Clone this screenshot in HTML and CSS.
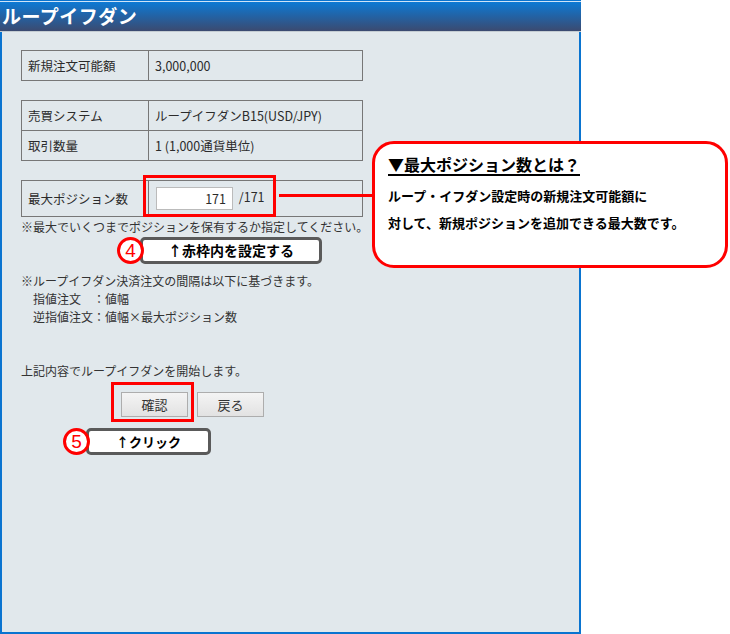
FILE: index.html
```html
<!DOCTYPE html>
<html lang="ja">

<head>
    <meta charset="UTF-8">
    <title>ループイフダン</title>
    <link rel="stylesheet" href="styles.css">
</head>

<body>

    <div class="panel">
        <div class="panel-header">
            <h1>ループイフダン</h1>
        </div>

        <div class="panel-body">
            <table class="info">
                <tr>
                    <th>新規注文可能額</th>
                    <td>3,000,000</td>
                </tr>
            </table>

            <table class="info">
                <tr>
                    <th>売買システム</th>
                    <td>ループイフダンB15(USD/JPY)</td>
                </tr>
                <tr>
                    <th>取引数量</th>
                    <td>1 (1,000通貨単位)</td>
                </tr>
            </table>

            <table class="info max-pos">
                <tr>
                    <th>最大ポジション数</th>
                    <td>
                        <span class="marked marked-input">
                            <input type="text" class="pos-input" value="171"> /171
                        </span>
                    </td>
                </tr>
            </table>
            <p class="hint">※最大でいくつまでポジションを保有するか指定してください。</p>

            <!-- step 4 annotation -->
            <div class="step step-4">
                <span class="step-no">4</span>
                <span class="step-label">↑赤枠内を設定する</span>
            </div>

            <div class="rules">
                <p>※ループイフダン決済注文の間隔は以下に基づきます。</p>
                <div class="rule-grid">
                    <span>指値注文</span><span>：値幅</span>
                    <span>逆指値注文</span><span>：値幅×最大ポジション数</span>
                </div>
            </div>

            <p class="start">上記内容でループイフダンを開始します。</p>

            <div class="buttons">
                <span class="marked marked-button"><button class="btn">確認</button></span>
                <button class="btn">戻る</button>
            </div>

            <!-- step 5 annotation -->
            <div class="step step-5">
                <span class="step-no">5</span>
                <span class="step-label">↑クリック</span>
            </div>
        </div>
    </div>

    <div class="callout">
        <h2 class="callout-title">▼最大ポジション数とは？</h2>
        <p>ループ・イフダン設定時の新規注文可能額に</p>
        <p>対して、新規ポジションを追加できる最大数です。</p>
    </div>

</body>

</html>
```

FILE: styles.css
```css
* {
    box-sizing: border-box;
    margin: 0;
    padding: 0;
    font-family: "Noto Sans CJK JP", "Noto Sans", sans-serif;
}

body {
    width: 730px;
    height: 634px;
    background-color: #fff;
    color: #333;
    font-size: 12px;
    position: relative;
}

.panel {
    width: 581px;
    height: 634px;
    background-color: #e1e8ec;
    border: 2px solid #0a74d0;
    border-top: none;
}

.panel-header {
    height: 32px;
    background: linear-gradient(#0b7bd8, #3b4a70);
    border-top: 1px solid #0a74d0;
    border-bottom: 1px solid #c4ccd2;
    box-shadow: inset 0 1px 0 #cfe4f7;
    margin: 0 -2px 0 -2px;
}

.panel-header h1 {
    color: white;
    font-size: 19px;
    font-weight: bold;
    line-height: 30px;
    padding-left: 2px;
    letter-spacing: 0.5px;
}

.panel-body {
    padding: 18px 0 0 19px;
}

/* info tables */
.info {
    width: 342px;
    border-collapse: collapse;
    border: 1px solid #444;
    margin-bottom: 19px;
}

.info th,
.info td {
    border: 1px solid #777;
    text-align: left;
    font-weight: normal;
    font-size: 12.5px;
    line-height: 19px;
    padding: 5px 6px;
    color: #2b2b2b;
    white-space: nowrap;
}

.info th {
    width: 127px;
}

.max-pos {
    margin-bottom: 0;
    margin-top: 1px;
}

.max-pos td {
    padding: 6px 6px 6px 7px;
}

.pos-input {
    width: 77px;
    height: 23px;
    border: 1px solid #bbb;
    background: white;
    text-align: right;
    font-size: 12.5px;
    padding: 0 6px;
    color: #2b2b2b;
    vertical-align: middle;
    margin-right: 3px;
}

/* red highlight frames */
.marked {
    position: relative;
    display: inline-block;
}

.marked::after {
    content: "";
    position: absolute;
    border: 3px solid #f00;
}

.marked-input::after {
    left: -13px;
    top: -12px;
    right: -11px;
    bottom: -7px;
}

.marked-button::after {
    left: -10px;
    top: -10px;
    right: -6px;
    bottom: -5px;
}

.hint {
    line-height: 16px;
    margin-top: 2px;
    white-space: nowrap;
}

/* step annotations */
.step {
    display: flex;
    align-items: center;
    height: 28px;
}

.step-4 {
    margin: 1px 0 0 96px;
}

.step-5 {
    margin: 10px 0 0 42px;
}

.step-no {
    position: relative;
    z-index: 1;
    width: 27px;
    height: 27px;
    border-radius: 50%;
    border: 3px solid #f00;
    background: white;
    color: #f00;
    font-family: "Liberation Sans", sans-serif;
    font-size: 19px;
    line-height: 21px;
    text-align: center;
}

.step-label {
    height: 27px;
    margin-left: -4px;
    border: 3px solid #5a5a5a;
    border-radius: 5px;
    background: white;
    color: #000;
    font-weight: bold;
    text-align: center;
    line-height: 21px;
}

.step-4 .step-label {
    width: 182px;
    font-size: 14px;
}

.step-5 .step-label {
    width: 125px;
    font-size: 13px;
}

.rules {
    margin-top: 8px;
    line-height: 18px;
}

.rule-grid {
    display: grid;
    grid-template-columns: 60px auto;
    justify-content: start;
    padding-left: 12px;
}

.start {
    margin-top: 36px;
    line-height: 18px;
}

.buttons {
    display: flex;
    gap: 9px;
    margin: 12px 0 0 100px;
}

.btn {
    width: 67px;
    height: 25px;
    border: 1px solid #adadad;
    background: linear-gradient(#f4f4f4, #e2e2e2);
    color: #333;
    font-size: 13px;
    display: block;
}

/* explanation bubble */
.callout {
    position: absolute;
    left: 372px;
    top: 141px;
    width: 356px;
    height: 127px;
    border: 3px solid #f00;
    border-radius: 22px;
    background: white;
    padding: 10px 0 0 13px;
    color: #000;
}

.callout::before {
    content: "";
    position: absolute;
    left: -96px;
    top: 50px;
    width: 93px;
    height: 3px;
    background: #f00;
}

.callout-title {
    display: inline-block;
    font-size: 16px;
    font-weight: bold;
    line-height: 20px;
    border-bottom: 2px solid #000;
    margin-bottom: 6px;
}

.callout p {
    font-size: 13px;
    font-weight: bold;
    line-height: 27px;
    white-space: nowrap;
}
```
